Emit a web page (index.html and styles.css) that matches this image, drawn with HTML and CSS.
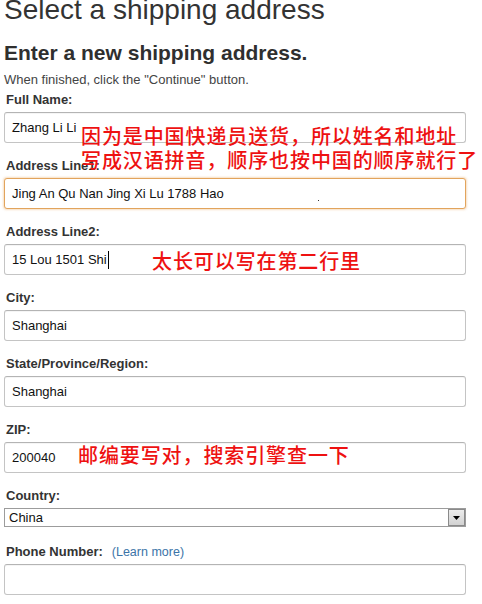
FILE: index.html
```html
<!DOCTYPE html>
<html lang="en">
<head>
<meta charset="utf-8">
<title>Select a shipping address</title>
<link rel="stylesheet" href="styles.css">
</head>
<body>
<div class="page">
  <h1 class="title">Select a shipping address</h1>
  <h2 class="subtitle">Enter a new shipping address.</h2>
  <p class="hint">When finished, click the "Continue" button.</p>

  <div class="field">
    <label class="label">Full Name:</label>
    <div class="box">
      <div class="input">Zhang Li Li</div>
      <div class="note note-1">因为是中国快递员送货，所以姓名和地址<br>写成汉语拼音，顺序也按中国的顺序就行了</div>
    </div>
  </div>

  <div class="field">
    <label class="label">Address Line1:</label>
    <div class="box">
      <div class="input input-focus">Jing An Qu Nan Jing Xi Lu 1788 Hao</div>
      <span class="speck"></span>
    </div>
  </div>

  <div class="field">
    <label class="label">Address Line2:</label>
    <div class="box">
      <div class="input">15 Lou 1501 Shi<span class="caret"></span></div>
      <div class="note note-2">太长可以写在第二行里</div>
    </div>
  </div>

  <div class="field">
    <label class="label">City:</label>
    <div class="box">
      <div class="input">Shanghai</div>
    </div>
  </div>

  <div class="field">
    <label class="label">State/Province/Region:</label>
    <div class="box">
      <div class="input">Shanghai</div>
    </div>
  </div>

  <div class="field">
    <label class="label">ZIP:</label>
    <div class="box">
      <div class="input">200040</div>
      <div class="note note-3">邮编要写对，搜索引擎查一下</div>
    </div>
  </div>

  <div class="field field-select">
    <label class="label">Country:</label>
    <div class="select">
      <span class="select-text">China</span>
      <span class="select-btn">
        <svg width="7" height="4" viewBox="0 0 7 4"><path d="M0 0H7L3.5 4Z" fill="#000"/></svg>
      </span>
    </div>
  </div>

  <div class="field">
    <label class="label">Phone Number:<span class="learn">(Learn more)</span></label>
    <div class="box">
      <div class="input"></div>
    </div>
  </div>
</div>
</body>
</html>
```

FILE: styles.css
```css
html, body {
  margin: 0;
  padding: 0;
  background: #ffffff;
}

body {
  font-family: "Liberation Sans", Arial, sans-serif;
  color: #333333;
}

.page {
  width: 462px;
  padding-left: 4px;
}

.title {
  margin: -6px 0 0 0;
  font-size: 28px;
  line-height: 32px;
  font-weight: normal;
  color: #333333;
}

.subtitle {
  margin: 15px 0 0 0;
  font-size: 21px;
  line-height: 24px;
  font-weight: bold;
  color: #2f2f2f;
}

.hint {
  margin: 7px 0 0 0;
  font-size: 13px;
  line-height: 16px;
  color: #444444;
}

.field {
  margin-top: 15px;
}

.hint + .field {
  margin-top: 4px;
}

.field-select + .field {
  margin-top: 17px;
}

.label {
  display: block;
  padding-left: 2px;
  margin-bottom: 4px;
  font-size: 13px;
  line-height: 16px;
  font-weight: bold;
  color: #333333;
}

.learn {
  margin-left: 9px;
  font-weight: normal;
  font-size: 12.5px;
  color: #3b74a8;
}

.box {
  position: relative;
}

.input {
  box-sizing: border-box;
  height: 31px;
  padding: 0 7px;
  display: flex;
  align-items: center;
  border: 1px solid #c4c4c4;
  border-top-color: #b4b4b4;
  border-radius: 3px;
  box-shadow: inset 0 1px 0 rgba(0, 0, 0, 0.04);
  font-size: 13px;
  color: #111111;
  background: #ffffff;
  white-space: nowrap;
}

.input-focus {
  border-color: #e2a45c;
  box-shadow: 0 0 2px 1px rgba(232, 160, 80, 0.35);
}

.caret {
  display: inline-block;
  width: 1px;
  height: 18px;
  margin-left: 1px;
  background: #000000;
}

.speck {
  position: absolute;
  left: 314px;
  top: 22px;
  width: 1px;
  height: 1px;
  background: #333333;
}

.note {
  position: absolute;
  font-family: "Noto Sans CJK SC", "Noto Sans CJK TC", sans-serif;
  font-size: 20px;
  font-weight: 500;
  line-height: 24px;
  letter-spacing: 0.9px;
  color: #ee1111;
  white-space: nowrap;
}

.note-1 {
  left: 77px;
  top: 12px;
}

.note-2 {
  left: 148px;
  top: 5px;
}

.note-3 {
  left: 74px;
  top: 1px;
}

.select {
  box-sizing: border-box;
  height: 19px;
  display: flex;
  align-items: stretch;
  border: 1px solid #9c9c9c;
  background: #ffffff;
}

.select-text {
  flex: 1;
  padding-left: 4px;
  font-size: 13px;
  line-height: 17px;
  color: #111111;
}

.select-btn {
  width: 17px;
  display: flex;
  align-items: center;
  justify-content: center;
  box-sizing: border-box;
  border: 1px solid #8a8a8a;
  background: linear-gradient(#ececec, #d2d2d2);
}
```
